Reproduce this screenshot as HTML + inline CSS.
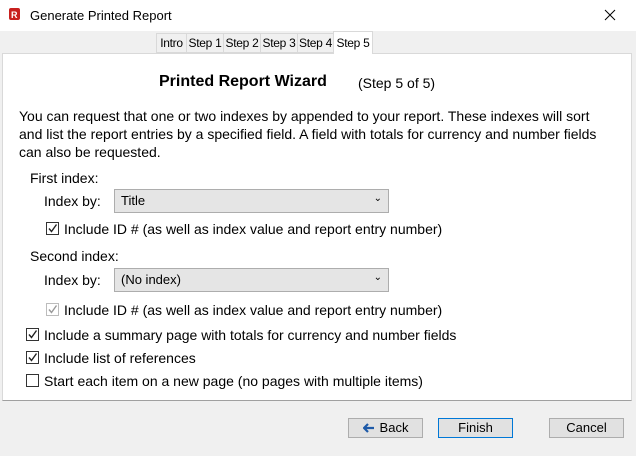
<!DOCTYPE html>
<html><head><style>
*{margin:0;padding:0;box-sizing:border-box}
body{width:636px;height:456px;background:#f0f0f0;font-family:"Liberation Sans",sans-serif;font-size:14px;color:#000;position:relative;overflow:hidden}
.a{position:absolute;white-space:nowrap}
.tab{position:absolute;top:33px;height:20px;border:1px solid #d9d9d9;background:#f0f0f0;font-size:12px;letter-spacing:-0.3px;text-align:center;line-height:18px;white-space:nowrap;overflow:hidden}
.cb{position:absolute;width:13px;height:13px;border:1px solid #333;background:#fff}
.cb svg{position:absolute;left:0px;top:0px}
.sel{position:absolute;height:24px;border:1px solid #adadad;background:#e5e5e5;font-size:13px;line-height:22px;padding-left:6px}
.btn{position:absolute;top:418px;height:20px;width:75px;border:1px solid #adadad;background:#e1e1e1;text-align:center;line-height:18px;font-size:13px}
</style></head><body>
<div class="a" style="left:0;top:0;width:636px;height:31px;background:#fff"></div>
<svg class="a" style="left:8px;top:7px" width="16" height="16"><rect x="1" y="1" width="11" height="12" rx="2" fill="#c8201e"/><text x="3" y="11" font-size="9" fill="#fff" font-family="Liberation Sans" font-weight="bold">R</text></svg>
<div class="a" style="left:30px;top:8px;font-size:13px">Generate Printed Report</div>
<svg class="a" style="left:504px;top:9px;left:504px" width="0" height="0"></svg>
<svg class="a" style="left:604px;top:9px" width="12" height="12"><path d="M1 1L11 11M11 1L1 11" stroke="#000" stroke-width="1"/></svg>
<div class="tab" style="left:156px;width:31px">Intro</div>
<div class="tab" style="left:186px;width:38px">Step 1</div>
<div class="tab" style="left:223px;width:38px">Step 2</div>
<div class="tab" style="left:260px;width:38px">Step 3</div>
<div class="tab" style="left:297px;width:37px">Step 4</div>
<div class="a" style="left:2px;top:53px;width:630px;height:348px;background:#fff;border:1px solid #d9d9d9;border-bottom-color:#a0a0a0"></div>
<div class="tab" style="left:333px;top:31px;width:40px;height:23px;background:#fff;border-bottom:none;line-height:22px">Step 5</div>
<div class="a" style="left:159px;top:73px;font-size:16px;font-weight:bold">Printed Report Wizard</div>
<div class="a" style="left:358px;top:75px;font-size:14px">(Step 5 of 5)</div>
<div class="a" style="left:19px;top:107px;line-height:18px;white-space:normal;width:596px">You can request that one or two indexes by appended to your report. These indexes will sort and list the report entries by a specified field. A field with totals for currency and number fields can also be requested.</div>
<div class="a" style="left:30px;top:170px">First index:</div>
<div class="a" style="left:44px;top:193px">Index by:</div>
<div class="sel" style="left:114px;top:189px;width:275px">Title<span class="a" style="right:6px;top:-2px;font-size:10px">⌄</span></div>
<div class="cb" style="left:46px;top:222px"><svg width="11" height="11"><path d="M2 5.5l2.5 3 5-7" stroke="#222" stroke-width="1.4" fill="none"/></svg></div>
<div class="a" style="left:64px;top:221px">Include ID # (as well as index value and report entry number)</div>
<div class="a" style="left:30px;top:248px">Second index:</div>
<div class="sel" style="left:114px;top:268px;width:275px">(No index)<span class="a" style="right:6px;top:-2px;font-size:10px">⌄</span></div>
<div class="a" style="left:44px;top:272px">Index by:</div>
<div class="cb" style="left:46px;top:303px;border-color:#bcbcbc"><svg width="11" height="11"><path d="M2 5.5l2.5 3 5-7" stroke="#999" stroke-width="1.4" fill="none"/></svg></div>
<div class="a" style="left:64px;top:302px">Include ID # (as well as index value and report entry number)</div>
<div class="cb" style="left:26px;top:328px"><svg width="11" height="11"><path d="M2 5.5l2.5 3 5-7" stroke="#222" stroke-width="1.4" fill="none"/></svg></div>
<div class="a" style="left:44px;top:327px">Include a summary page with totals for currency and number fields</div>
<div class="cb" style="left:26px;top:351px"><svg width="11" height="11"><path d="M2 5.5l2.5 3 5-7" stroke="#222" stroke-width="1.4" fill="none"/></svg></div>
<div class="a" style="left:44px;top:350px">Include list of references</div>
<div class="cb" style="left:26px;top:374px"></div>
<div class="a" style="left:44px;top:373px">Start each item on a new page (no pages with multiple items)</div>
<div class="btn" style="left:348px"><svg style="vertical-align:-1px;margin-right:5px" width="12" height="10"><path d="M1 5H11M5 1L1 5L5 9" stroke="#1e5aa8" stroke-width="2.2" fill="none"/></svg>Back</div>
<div class="btn" style="left:438px;border-color:#0078d7">Finish</div>
<div class="btn" style="left:549px">Cancel</div>
</body></html>
